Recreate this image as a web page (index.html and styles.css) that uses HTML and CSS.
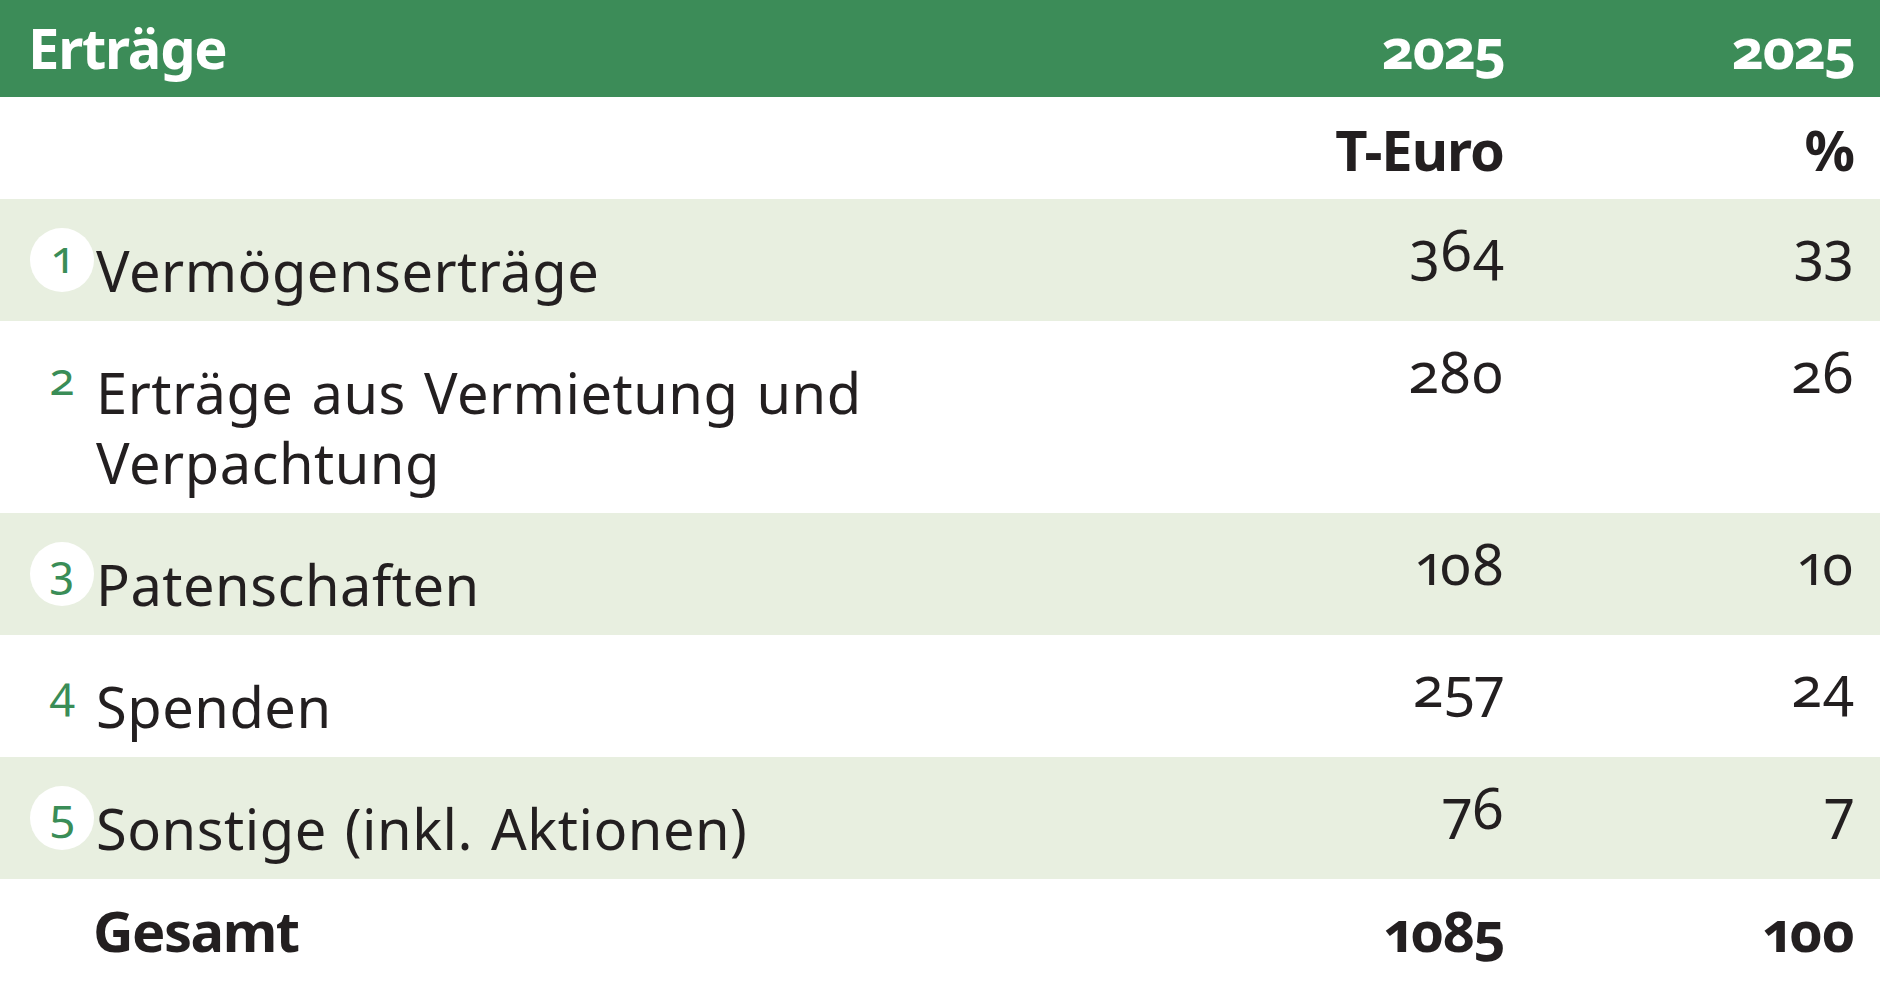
FILE: index.html
```html
<!DOCTYPE html>
<html lang="de">
<head>
<meta charset="utf-8">
<title>Erträge</title>
<link rel="stylesheet" href="styles.css">
</head>
<body>
<div class="table">
  <div class="row head">
    <div class="title">Erträge</div>
    <div class="val">2025</div>
    <div class="pct">2025</div>
  </div>
  <div class="row sub">
    <div class="title"></div>
    <div class="val">T-Euro</div>
    <div class="pct">%</div>
  </div>
  <div class="row alt">
    <div class="marker"><span class="num circle">1</span></div>
    <div class="label">Vermögenserträge</div>
    <div class="val">364</div>
    <div class="pct">33</div>
  </div>
  <div class="row">
    <div class="marker"><span class="num">2</span></div>
    <div class="label">Erträge aus Vermietung und<br>Verpachtung</div>
    <div class="val">280</div>
    <div class="pct">26</div>
  </div>
  <div class="row alt">
    <div class="marker"><span class="num circle">3</span></div>
    <div class="label">Patenschaften</div>
    <div class="val">108</div>
    <div class="pct">10</div>
  </div>
  <div class="row">
    <div class="marker"><span class="num">4</span></div>
    <div class="label">Spenden</div>
    <div class="val">257</div>
    <div class="pct">24</div>
  </div>
  <div class="row alt">
    <div class="marker"><span class="num circle">5</span></div>
    <div class="label">Sonstige (inkl. Aktionen)</div>
    <div class="val">76</div>
    <div class="pct">7</div>
  </div>
  <div class="row total">
    <div class="marker"></div>
    <div class="label">Gesamt</div>
    <div class="val">1085</div>
    <div class="pct">100</div>
  </div>
</div>
</body>
</html>
```

FILE: styles.css
```css
* { box-sizing: border-box; }
html, body {
  margin: 0;
  padding: 0;
  background: #ffffff;
}
body {
  font-family: "Noto Sans", "Open Sans", sans-serif;
  font-size: 56px;
  line-height: 70px;
  color: #231f20;
  font-variant-numeric: oldstyle-nums proportional-nums;
  font-feature-settings: "onum" 1, "pnum" 1;
}
.table {
  width: 1880px;
}
.row {
  display: grid;
  grid-template-columns: 96px 1fr 300px 350px;
  padding-right: 26px;
  align-items: start;
}
.alt { background: #e8efe0; }

.head {
  background: #3c8c58;
  color: #ffffff;
  font-weight: 700;
  padding: 12px 26px 15px 0;
}
.head .title, .sub .title {
  grid-column: 1 / 3;
  padding-left: 28px;
  letter-spacing: -1.2px;
}
.sub {
  font-weight: 700;
  padding-top: 17px;
  padding-bottom: 15px;
}
.head .val, .head .pct {
  padding-top: 0;
  letter-spacing: -2px;
}
.sub .val, .sub .pct {
  padding-top: 0;
  letter-spacing: -1px;
}

.val, .pct {
  text-align: right;
  padding-top: 15px;
}
.label {
  padding: 36px 0 16px;
  letter-spacing: 0.5px;
  word-spacing: 3px;
}
.marker {
  padding-top: 29px;
  padding-left: 30px;
}
.num {
  display: block;
  width: 64px;
  height: 64px;
  border-radius: 50%;
  text-align: center;
  font-size: 46px;
  line-height: 54px;
  color: #3a8d57;
}
.circle { background: #ffffff; }

.total {
  font-weight: 700;
}
.total .label,
.total .val,
.total .pct {
  padding-top: 16px;
  padding-bottom: 19px;
  letter-spacing: -1.5px;
}
.total .label {
  margin-left: -3px;
}
```
